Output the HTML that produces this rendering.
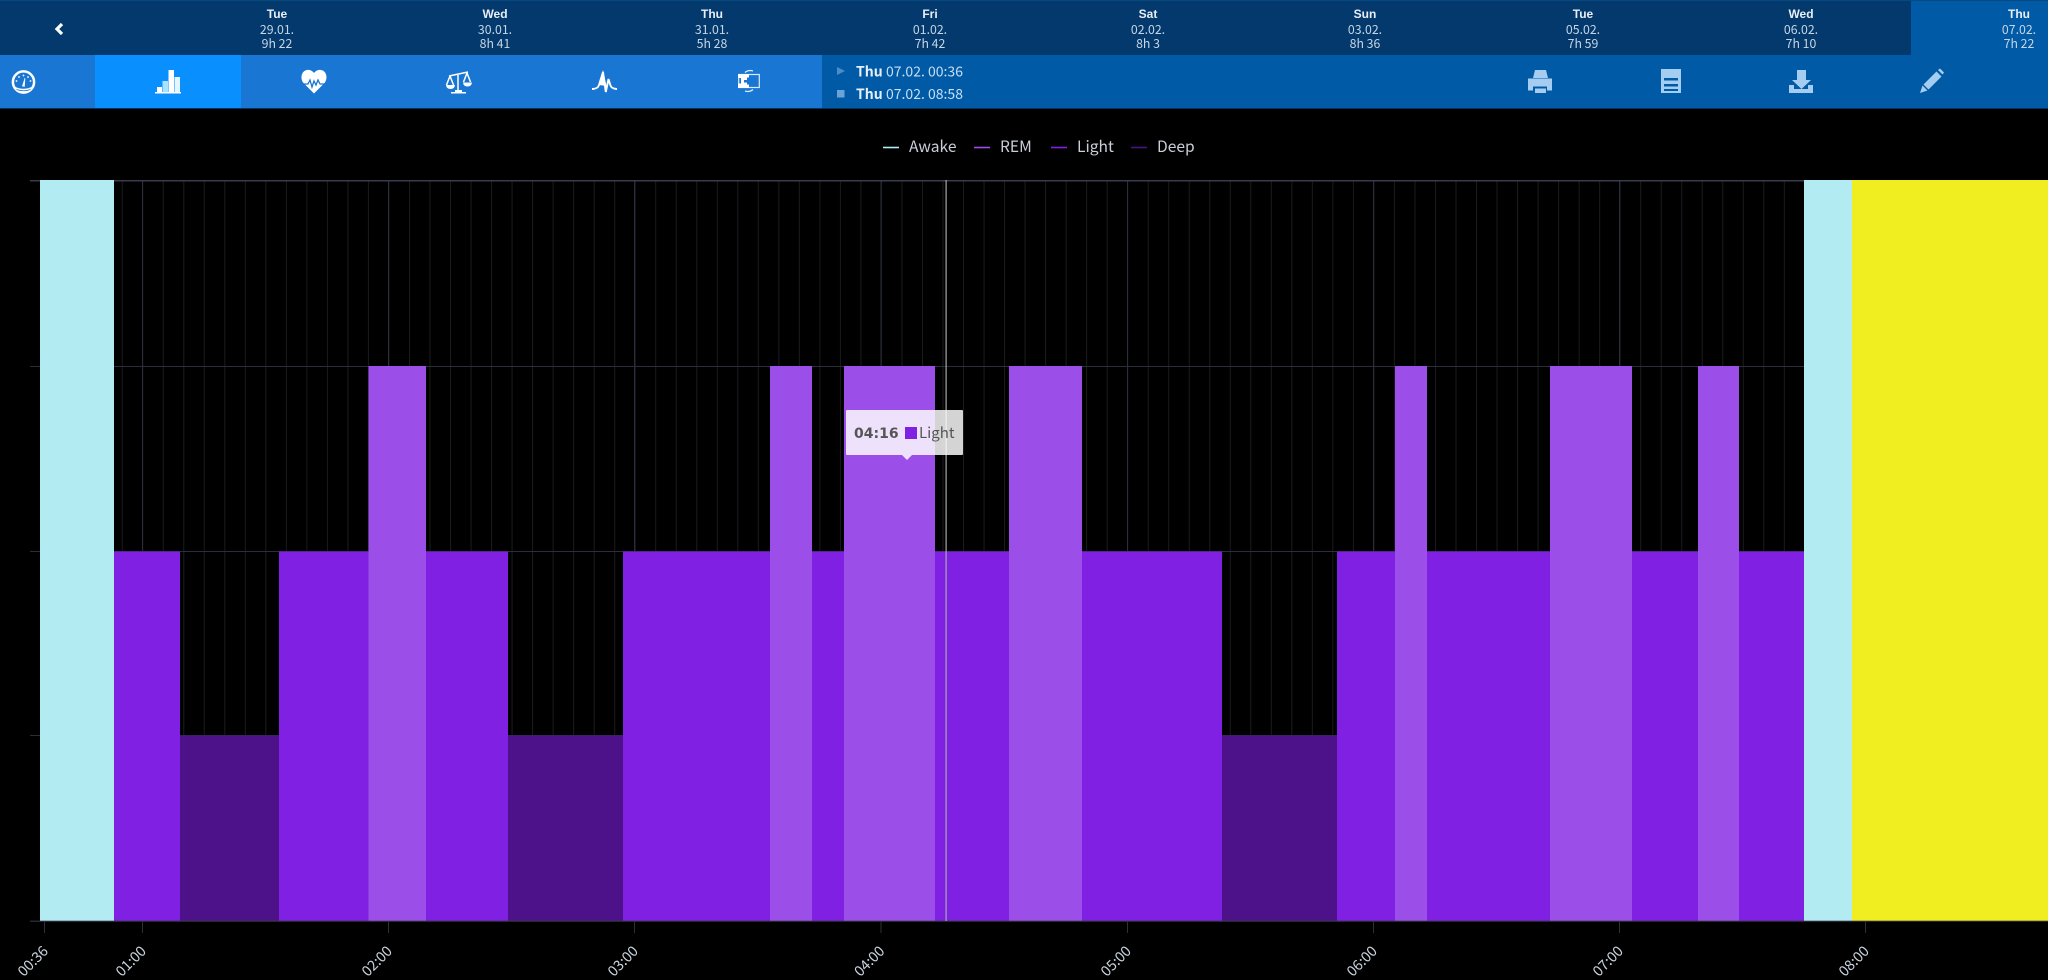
<!DOCTYPE html>
<html><head><meta charset="utf-8"><style>
html,body{margin:0;padding:0;background:#000;width:2048px;height:980px;overflow:hidden}
svg{display:block;position:absolute;left:0;top:0}
text{font-family:"Noto Sans CJK JP","Liberation Sans",sans-serif}
.d{font-size:12.3px;fill:#c6d6e6;text-anchor:middle}
.n{font-size:12px;font-weight:700;fill:#e8eef5;text-anchor:middle;font-family:"Liberation Sans",sans-serif}
.t{font-size:14px;fill:#c9dff5}
.b{font-size:14px;font-weight:700;fill:#e6f0fa}
.l{font-size:15.6px;fill:#c9ced8}
.x{font-size:14.3px;fill:#c9d4de;text-anchor:end}
</style></head><body>
<svg width="2048" height="980" viewBox="0 0 2048 980" xmlns="http://www.w3.org/2000/svg">
<defs><pattern id="m" x="121.7" y="0" width="20.52" height="10" patternUnits="userSpaceOnUse"><rect width="1" height="10" fill="#1a1b20"/></pattern></defs>
<rect width="2048" height="980" fill="#000"/>
<!-- top bar -->
<rect width="2048" height="55" fill="#03396c"/>
<rect width="2048" height="1" fill="#04497f"/>
<rect x="1911" y="1" width="137" height="54" fill="#005aa5"/>
<path d="M62 24l-5 5 5 5" fill="none" stroke="#fff" stroke-width="3.2"/>
<text class="n" x="277" y="18">Tue</text><text class="d" x="277" y="34">29.01.</text><text class="d" x="277" y="48">9h 22</text>
<text class="n" x="495" y="18">Wed</text><text class="d" x="495" y="34">30.01.</text><text class="d" x="495" y="48">8h 41</text>
<text class="n" x="712" y="18">Thu</text><text class="d" x="712" y="34">31.01.</text><text class="d" x="712" y="48">5h 28</text>
<text class="n" x="930" y="18">Fri</text><text class="d" x="930" y="34">01.02.</text><text class="d" x="930" y="48">7h 42</text>
<text class="n" x="1148" y="18">Sat</text><text class="d" x="1148" y="34">02.02.</text><text class="d" x="1148" y="48">8h 3</text>
<text class="n" x="1365" y="18">Sun</text><text class="d" x="1365" y="34">03.02.</text><text class="d" x="1365" y="48">8h 36</text>
<text class="n" x="1583" y="18">Tue</text><text class="d" x="1583" y="34">05.02.</text><text class="d" x="1583" y="48">7h 59</text>
<text class="n" x="1801" y="18">Wed</text><text class="d" x="1801" y="34">06.02.</text><text class="d" x="1801" y="48">7h 10</text>
<text class="n" x="2019" y="18">Thu</text><text class="d" x="2019" y="34">07.02.</text><text class="d" x="2019" y="48">7h 22</text>
<!-- nav bar -->
<rect y="55" width="822" height="53" fill="#1976d2"/>
<rect x="95" y="55" width="146" height="53" fill="#0a8fff"/>
<rect x="822" y="55" width="1226" height="53" fill="#005aa5"/>
<rect y="108" width="2048" height="1" fill="#02345f"/>
<!-- gauge -->
<circle cx="23.500" cy="82" r="10.600" fill="none" stroke="#fff" stroke-width="2.500"/>
<path d="M14.500 86.500q9 4.500 18 0l-2.500 5q-6.500 2-13 0z" fill="#fff"/>
<path d="M16.500 89.500q7 2.500 14 0" fill="none" stroke="#1976d2" stroke-width=".8"/>
<path d="M25 78l-2.600 8 2 .5z" fill="#fff" stroke="#fff" stroke-width=".6"/>
<g fill="#fff"><circle cx="23.500" cy="75.500" r=".9"/><circle cx="19" cy="77" r=".9"/><circle cx="28" cy="77" r=".9"/><circle cx="16.500" cy="81" r=".9"/><circle cx="30.500" cy="81" r=".9"/></g>
<!-- bars -->
<path d="M157 87h5v5h-5zM168.500 70h5.500v22h-5.500zM155 92h26v1.500h-26z" fill="#fff"/>
<path d="M162.500 81h5.500v11h-5.500z" fill="#a8e4ff"/>
<path d="M174.500 77h5.500v15h-5.500z" fill="#e4f6ff"/>
<!-- heart -->
<path d="M314 93.500l-10.500-10.500c-3.500-4-2.500-12 3.500-13 3-.5 5.500 1 7 3 1.500-2 4-3.500 7-3 6 1 7 9 3.500 13z" fill="#fff"/>
<path d="M302 84h6l2-4 2 7 2-6 2 4 2-5 2 4h6" fill="none" stroke="#1976d2" stroke-width="1.300"/>
<!-- scales -->
<path d="M458 75v16M449 76l19-4M450 76l-3.500 9M450 76l3.500 9M467 73l-3.500 9M467 73l3.500 9" fill="none" stroke="#fff" stroke-width="1.500"/>
<path d="M446 85h9q-.5 4-4.500 4t-4.500-4zM463 82.500h9q-.5 4-4.500 4t-4.500-4z" fill="#fff"/>
<path d="M455 90h7v2h4v1.500h-15v-1.500h4z" fill="#fff"/>
<!-- pulse -->
<path d="M599 85l4-15 3.500 16z" fill="#fff"/>
<path d="M592 89c4 0 6-1 7-4l4-13 2.800 20 2.700-13 1.800 6c1 3 3 4 6.700 4" fill="none" stroke="#fff" stroke-width="1.900"/>
<!-- puzzle -->
<rect x="738.700" y="74.500" width="20.600" height="13" fill="none" stroke="#d8ebfc" stroke-width="1.200"/>
<path d="M738 74h11v3.500h-2v2.500h-3v2.500h3v2h2v3.500h-11v-4.500h3v-5.500h-3z" fill="#fff"/>
<path d="M745 72.500q3.500-3 8-1.500M753 89.500q-3.500 3-8 1.500" fill="none" stroke="#dcecfb" stroke-width="1.300"/>
<!-- range -->
<path d="M837 67l8 4-8 4z" fill="#4b8dcb"/><rect x="837" y="90" width="7.500" height="7.500" fill="#6ba3d8"/>
<text class="b" x="856" y="76.500">Thu</text><text class="t" x="886" y="76.500">07.02. 00:36</text>
<text class="b" x="856" y="99">Thu</text><text class="t" x="886" y="99">07.02. 08:58</text>
<!-- right icons -->
<g fill="#a5cdf2">
<path d="M1535 70h11l2 8h-15zM1528 78.500h24v12h-5v-4h-14v4h-5zM1535 88.500h11v4.500h-11z"/>
<path d="M1661 69h20v24h-20zM1664 78v2.500h14v-2.500zM1664 84v2.500h14v-2.500zM1664 89v2h14v-2z" fill-rule="evenodd"/>
<path d="M1797 70h9v10h5l-9.500 9-9.500-9h5zM1789 85h5v4h14v-4h5v8h-24z"/>
<path d="M1920 93l2.500-7.500 5 5zM1923.500 84.500l13-13 5 5-13 13zM1938 70l2-1.500 4 4-1.500 2z"/>
</g>
<!-- legend -->
<path d="M883 147.500h16" stroke="#b2ebf2" stroke-width="1.600"/><text class="l" x="909" y="152">Awake</text>
<path d="M974 147.500h16" stroke="#9c4ee8" stroke-width="1.600"/><text class="l" x="1000" y="152">REM</text>
<path d="M1051 147.500h16" stroke="#7f20e3" stroke-width="1.600"/><text class="l" x="1077" y="152">Light</text>
<path d="M1131 147.500h16" stroke="#4d1289" stroke-width="1.600"/><text class="l" x="1157" y="152">Deep</text>
<!-- grid -->
<rect x="114" y="180" width="1690" height="741" fill="url(#m)"/>
<g fill="#2b2d3a">
<rect x="142" y="180" width="1" height="741"/><rect x="388" y="180" width="1" height="741"/><rect x="634" y="180" width="1" height="741"/><rect x="880.500" y="180" width="1" height="741"/><rect x="1127" y="180" width="1" height="741"/><rect x="1373" y="180" width="1" height="741"/><rect x="1619" y="180" width="1" height="741"/>
<rect x="30" y="180" width="2018" height="1.500" fill="#3a3c4a"/><rect x="30" y="366" width="2018" height="1"/><rect x="30" y="551" width="2018" height="1"/><rect x="30" y="735" width="2018" height="1"/>
</g>
<!-- blocks -->
<rect x="40" y="180" width="74" height="741" fill="#b2ebf2"/>
<rect x="114" y="551.500" width="66" height="369.500" fill="#7f20e3"/>
<rect x="180" y="735.500" width="99" height="185.500" fill="#4d1289"/>
<rect x="279" y="551.500" width="90" height="369.500" fill="#7f20e3"/>
<rect x="368.500" y="366" width="57.500" height="555" fill="#9c4ee8"/>
<rect x="426" y="551.500" width="82" height="369.500" fill="#7f20e3"/>
<rect x="508" y="735.500" width="115" height="185.500" fill="#4d1289"/>
<rect x="623" y="551.500" width="147" height="369.500" fill="#7f20e3"/>
<rect x="770" y="366" width="42" height="555" fill="#9c4ee8"/>
<rect x="812" y="551.500" width="32" height="369.500" fill="#7f20e3"/>
<rect x="844" y="366" width="91" height="555" fill="#9c4ee8"/>
<rect x="935" y="551.500" width="74" height="369.500" fill="#7f20e3"/>
<rect x="1009" y="366" width="73" height="555" fill="#9c4ee8"/>
<rect x="1082" y="551.500" width="140" height="369.500" fill="#7f20e3"/>
<rect x="1222" y="735.500" width="115" height="185.500" fill="#4d1289"/>
<rect x="1337" y="551.500" width="58" height="369.500" fill="#7f20e3"/>
<rect x="1395" y="366" width="32" height="555" fill="#9c4ee8"/>
<rect x="1427" y="551.500" width="123" height="369.500" fill="#7f20e3"/>
<rect x="1550" y="366" width="82" height="555" fill="#9c4ee8"/>
<rect x="1632" y="551.500" width="66" height="369.500" fill="#7f20e3"/>
<rect x="1698" y="366" width="41" height="555" fill="#9c4ee8"/>
<rect x="1739" y="551.500" width="65" height="369.500" fill="#7f20e3"/>
<rect x="1804" y="180" width="48" height="741" fill="#b2ebf2"/>
<rect x="1852" y="180" width="196" height="741" fill="#f0ee20"/>
<!-- axis -->
<rect x="30" y="920.500" width="2018" height="1.500" fill="#3a3c4a" fill-opacity=".65"/>
<g fill="#2e3038">
<rect x="44" y="921" width="1" height="12"/><rect x="142" y="921" width="1" height="12"/><rect x="388" y="921" width="1" height="12"/><rect x="634" y="921" width="1" height="12"/><rect x="880.500" y="921" width="1" height="12"/><rect x="1127" y="921" width="1" height="12"/><rect x="1373" y="921" width="1" height="12"/><rect x="1619" y="921" width="1" height="12"/><rect x="1865" y="921" width="1" height="12"/>
</g>
<text class="x" transform="translate(49,952) rotate(-45)">00:36</text>
<text class="x" transform="translate(147,952) rotate(-45)">01:00</text>
<text class="x" transform="translate(393,952) rotate(-45)">02:00</text>
<text class="x" transform="translate(639,952) rotate(-45)">03:00</text>
<text class="x" transform="translate(885.500,952) rotate(-45)">04:00</text>
<text class="x" transform="translate(1132,952) rotate(-45)">05:00</text>
<text class="x" transform="translate(1378,952) rotate(-45)">06:00</text>
<text class="x" transform="translate(1624,952) rotate(-45)">07:00</text>
<text class="x" transform="translate(1870,952) rotate(-45)">08:00</text>
<!-- crosshair -->
<rect x="945.500" y="180" width="1.200" height="741" fill="#a8a8a8"/>
<!-- tooltip -->
<path d="M847 410h115a1 1 0 0 1 1 1v43a1 1 0 0 1-1 1h-50l-5 5-5-5h-55a1 1 0 0 1-1-1v-43a1 1 0 0 1 1-1z" fill="#fff" fill-opacity=".83"/>
<text x="854" y="438" style="font-family:'DejaVu Sans',sans-serif;font-size:14px;font-weight:700" fill="#555">04:16</text>
<rect x="905" y="427" width="12" height="12" fill="#7f20e3"/>
<text x="919" y="438" style="font-size:15px" fill="#555">Light</text>
</svg>
</body></html>
